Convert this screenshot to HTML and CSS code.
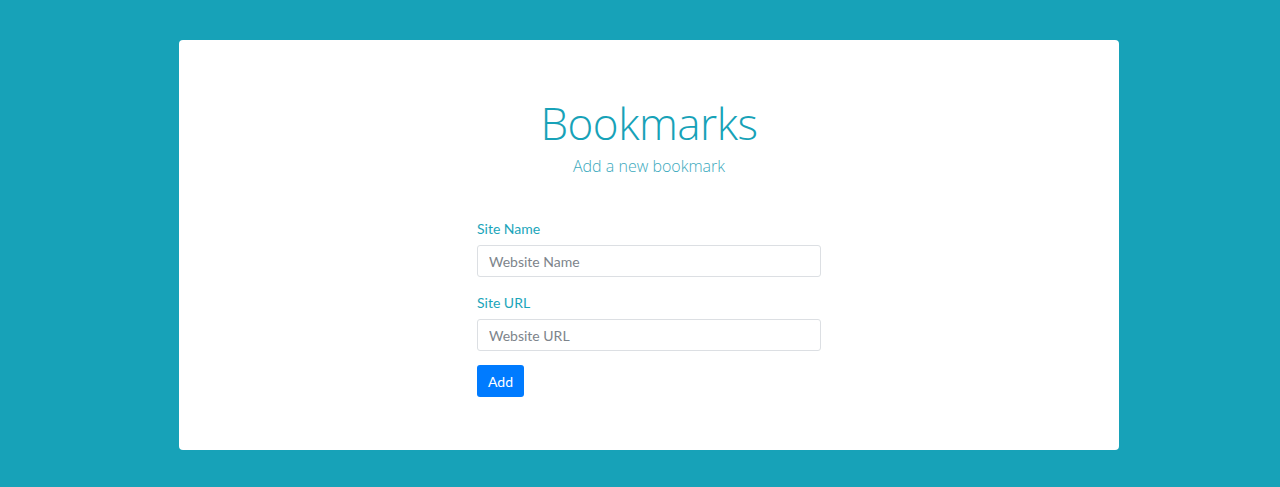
FILE: index.html
```html
<!DOCTYPE html>
<html lang="en">
<head>
<meta charset="utf-8">
<title>Bookmarks</title>
<link rel="stylesheet" href="styles.css">
</head>
<body>
<main class="card">
  <header class="heading">
    <h1 class="title">Bookmarks</h1>
    <p class="subtitle">Add a new bookmark</p>
  </header>
  <form class="form">
    <div class="group">
      <label class="label" for="siteName">Site Name</label>
      <input class="control" id="siteName" type="text" placeholder="Website Name">
    </div>
    <div class="group group-last">
      <label class="label" for="siteUrl">Site URL</label>
      <input class="control" id="siteUrl" type="text" placeholder="Website URL">
    </div>
    <button class="btn" type="button">Add</button>
  </form>
</main>
</body>
</html>
```
FILE: styles.css
```css
html, body {
  margin: 0;
  padding: 0;
}
body {
  background: #17a2b8;
  font-family: Lato, "Open Sans", sans-serif;
  font-size: 14px;
  padding-top: 40px;
  height: 487px;
  box-sizing: border-box;
}
.card {
  width: 940px;
  height: 410px;
  margin: 0 auto 0 179px;
  background: #fff;
  border-radius: 4px;
  box-sizing: border-box;
  padding-top: 52px;
}
.heading {
  text-align: center;
  color: #17a2b8;
}
.title {
  margin: 0;
  font-family: "Open Sans", sans-serif;
  font-weight: 300;
  font-size: 44px;
  letter-spacing: -0.5px;
  line-height: 62px;
}
.subtitle {
  margin: 0;
  font-family: "Open Sans", sans-serif;
  font-weight: 300;
  font-size: 16px;
  line-height: 24px;
  color: #3aa9bd;
}
.form {
  width: 344px;
  margin: 40px auto 0;
}
.group {
  display: flex;
  flex-direction: column;
  margin-bottom: 15px;
}
.group-last {
  margin-bottom: 14px;
}
.label {
  color: #1ba5ba;
  font-size: 14px;
  line-height: 21px;
  margin-bottom: 6px;
}
.control {
  height: 32px;
  box-sizing: border-box;
  border: 1px solid #dcdfe3;
  border-radius: 3px;
  padding: 0 11px;
  font-family: Lato, "Open Sans", sans-serif;
  font-size: 14px;
  color: #495057;
}
.control::placeholder {
  color: #7d848b;
}
.btn {
  background: #007bff;
  color: #fff;
  border: none;
  border-radius: 3px;
  height: 32px;
  padding: 0 11px;
  font-family: Lato, "Open Sans", sans-serif;
  font-size: 14px;
}
```
